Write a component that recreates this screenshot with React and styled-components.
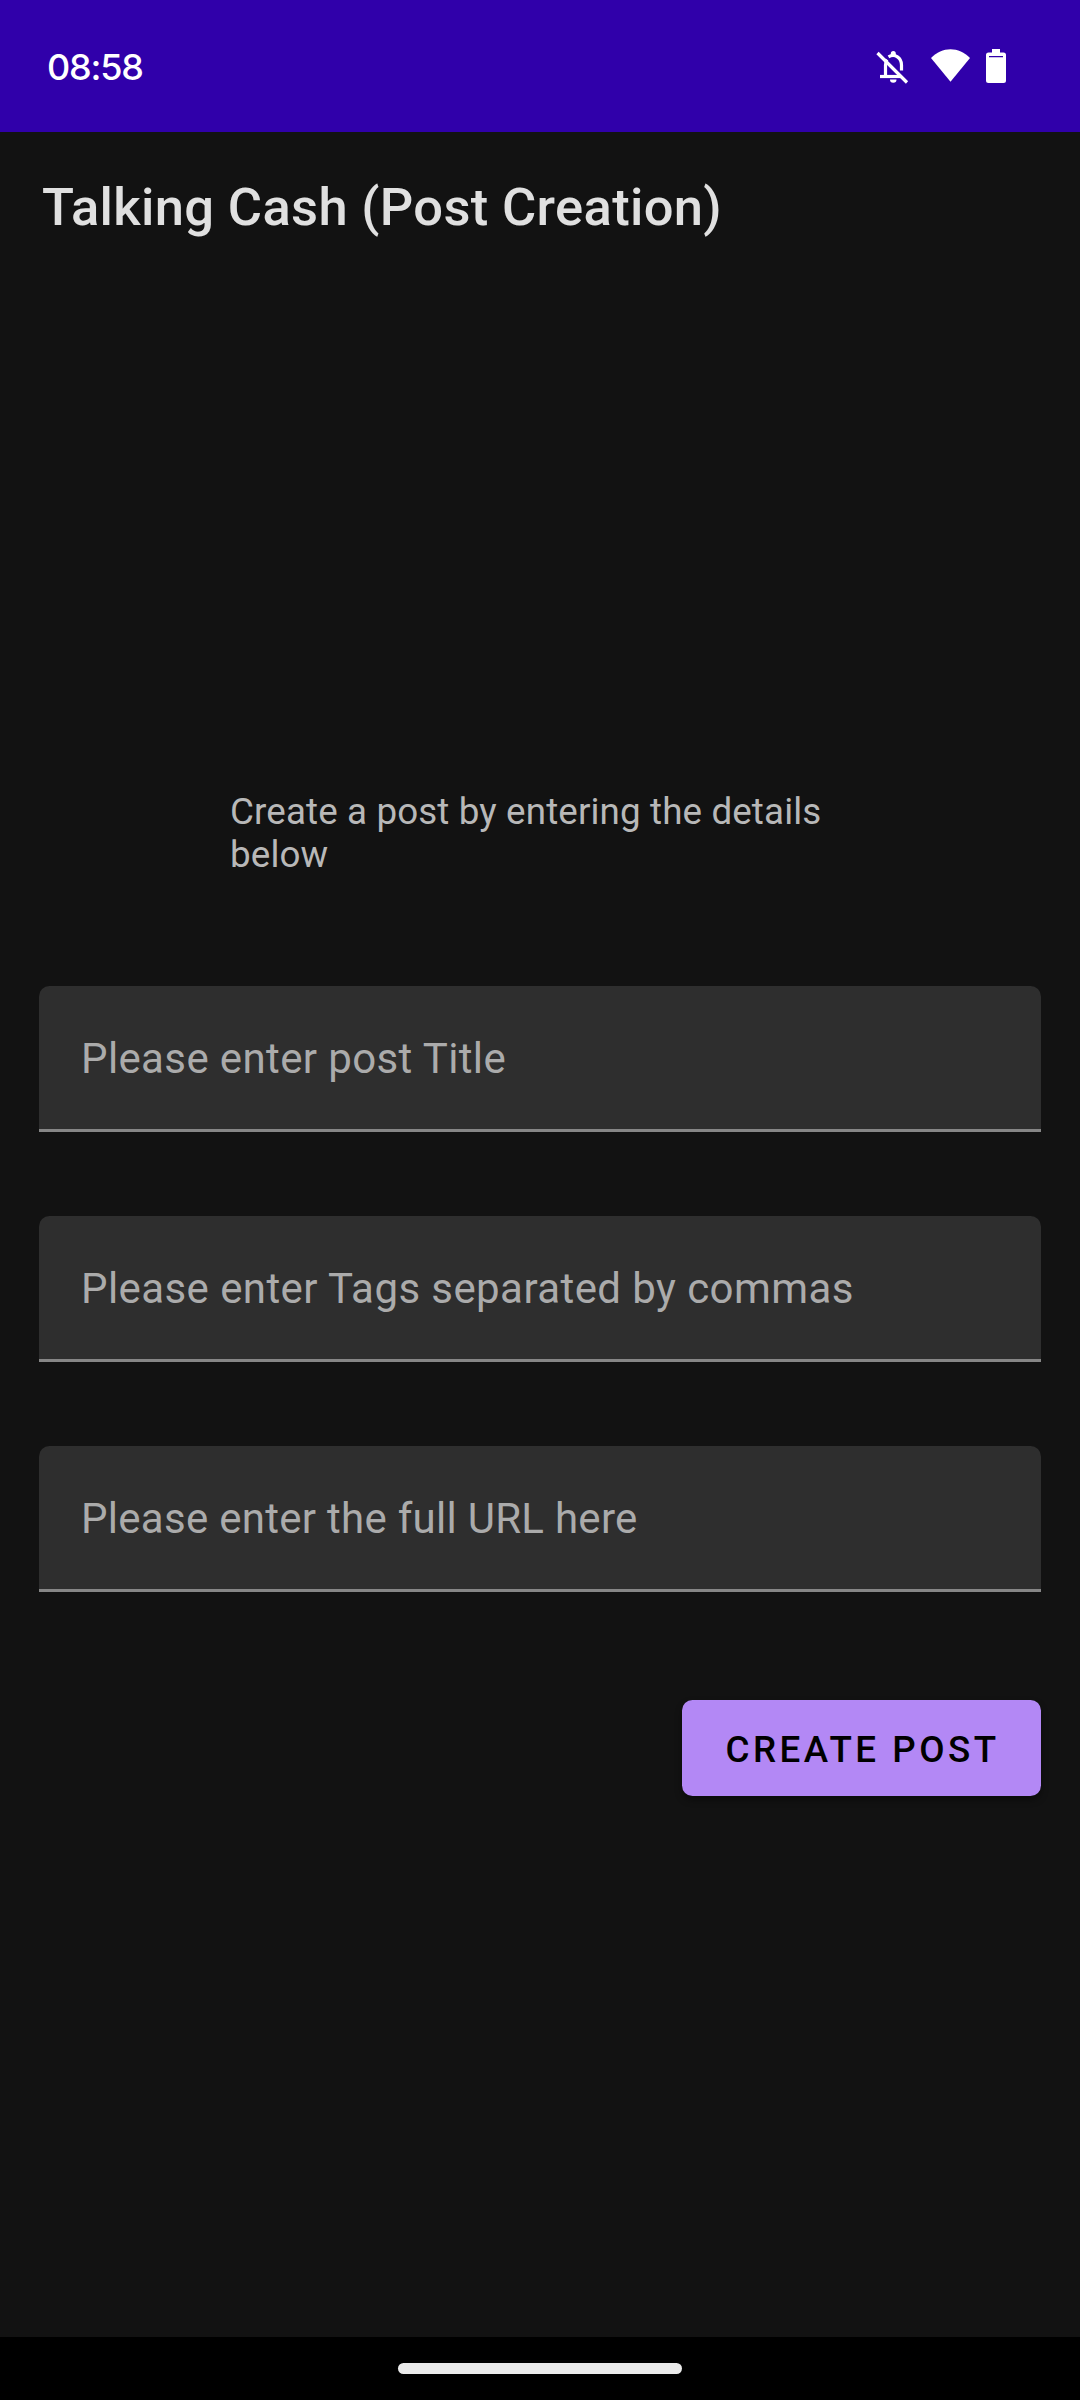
import React from "react";
import styled, { createGlobalStyle } from "styled-components";

const GlobalStyle = createGlobalStyle`
  * { box-sizing: border-box; }
  body { margin: 0; background: #121212; }
`;

const Screen = styled.div`
  display: flex;
  flex-direction: column;
  width: 1080px;
  height: 2400px;
  background: #121212;
  font-family: Roboto, "Noto Sans", sans-serif;
`;

const StatusBar = styled.header`
  display: flex;
  align-items: center;
  justify-content: space-between;
  height: 132px;
  padding: 0 72px 0 47px;
  background: #3000aa;
`;

const Clock = styled.time`
  padding-top: 1px;
  font-family: Inter, Roboto, sans-serif;
  font-size: 36px;
  font-weight: 550;
  line-height: 44px;
  letter-spacing: -1.2px;
  color: #fff;
`;

const StatusIcons = styled.svg`
  display: block;
  width: 136px;
  height: 42px;
`;

const TitleBar = styled.div`
  display: flex;
  align-items: center;
  height: 147px;
  padding: 2px 42px 0;
`;

const Title = styled.h1`
  margin: 0;
  font-size: 52.5px;
  font-weight: 500;
  line-height: 62px;
  letter-spacing: 0.34px;
  color: #e0e0e0;
`;

const Content = styled.main`
  display: flex;
  flex: 1;
  flex-direction: column;
  padding: 511px 39px 0;
`;

const Intro = styled.p`
  width: 620px;
  margin: 0 0 0 191px;
  font-size: 36.75px;
  line-height: 43px;
  letter-spacing: 0.13px;
  color: #b8b8b8;
`;

const Form = styled.form`
  display: flex;
  flex-direction: column;
  gap: 84px;
  margin-top: 110px;
`;

const Field = styled.label`
  display: flex;
  align-items: center;
  height: 146px;
  padding: 2px 42px 0;
  border-bottom: 3px solid #868686;
  border-radius: 10.5px 10.5px 0 0;
  background: #2e2e2e;
`;

const Hint = styled.span`
  font-size: 42px;
  line-height: 50px;
  letter-spacing: ${(p) => p.$tracking}px;
  color: #ababab;
`;

const Submit = styled.button`
  align-self: flex-end;
  width: 359px;
  height: 96px;
  margin-top: 24px;
  padding: 2px 0 0 2px;
  border: 0;
  border-radius: 10.5px;
  background: #b388f5;
  box-shadow: 0 4px 7px rgba(0, 0, 0, 0.4);
  font-family: inherit;
  font-size: 36.75px;
  font-weight: 460;
  letter-spacing: 3.5px;
  color: #000;
`;

const NavigationBar = styled.footer`
  display: flex;
  justify-content: center;
  height: 63px;
  padding-top: 26px;
  background: #000;
`;

const HomeHandle = styled.div`
  width: 284px;
  height: 11px;
  border-radius: 5.5px;
  background: #ebebeb;
`;

const fields = [
  { hint: "Please enter post Title", tracking: 0.38 },
  { hint: "Please enter Tags separated by commas", tracking: 0.42 },
  { hint: "Please enter the full URL here", tracking: 0.28 },
];

export default function App() {
  return (
    <>
      <GlobalStyle />
      <Screen>
        <StatusBar>
          <Clock>08:58</Clock>
          <StatusIcons viewBox="872 45 136 42" fill="#fff" aria-hidden="true">
            <g fill="none" stroke="#fff" strokeWidth="3.2">
              <path d="M877.5 53 L907 82.5" />
              <path d="M880 76.5 H901" />
              <path d="M885.5 76 V65 Q885.5 61.5 887 59.5" />
              <path d="M888.5 56.8 C895 53 901.5 58 901.5 65 V70.5" />
            </g>
            <path d="M890.8 56 V53.5 A2.5 2.5 0 0 1 895.8 53.5 V56 Z" />
            <path d="M890 79.5 H896.5 A3.25 3.25 0 0 1 890 79.5 Z" />
            <path d="M931 58 C942 46.3 959 46.3 970 58 L950.5 81.8 Z" />
            <path
              fillRule="evenodd"
              d="M992 49 H1000 V52.5 H1003.5 Q1006 52.5 1006 55 V80.5 Q1006 83 1003.5 83 H988.5 Q986 83 986 80.5 V55 Q986 52.5 988.5 52.5 H992 Z M989 56 V57.2 H1003 V56 Z"
            />
          </StatusIcons>
        </StatusBar>
        <TitleBar>
          <Title>Talking Cash (Post Creation)</Title>
        </TitleBar>
        <Content>
          <Intro>Create a post by entering the details below</Intro>
          <Form>
            {fields.map(({ hint, tracking }) => (
              <Field key={hint}>
                <Hint $tracking={tracking}>{hint}</Hint>
              </Field>
            ))}
            <Submit type="button">CREATE POST</Submit>
          </Form>
        </Content>
        <NavigationBar>
          <HomeHandle />
        </NavigationBar>
      </Screen>
    </>
  );
}
